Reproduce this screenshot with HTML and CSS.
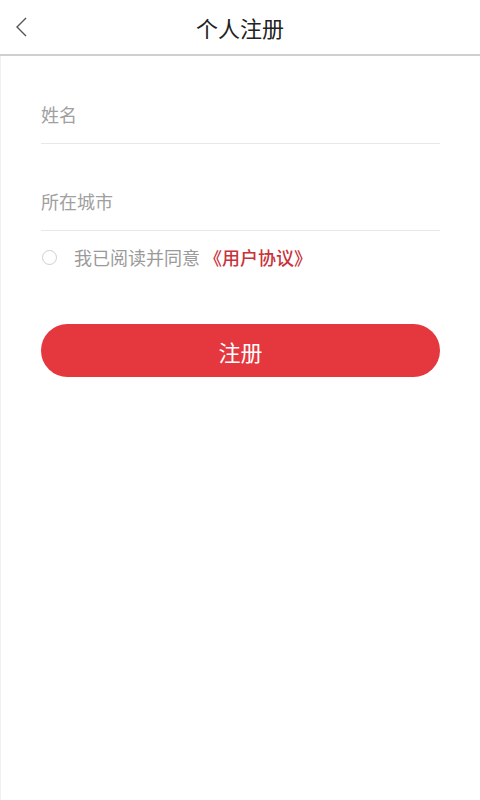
FILE: index.html
```html
<!DOCTYPE html>
<html lang="zh-CN">

<head>
    <meta charset="UTF-8">
    <meta name="viewport" content="width=device-width, initial-scale=1.0">
    <title>个人注册</title>
    <link rel="stylesheet" href="styles.css">
</head>

<body>
    <div class="header">
        <a class="back" href="#">
            <svg width="14" height="22" viewBox="0 0 14 22">
                <path d="M11 2 L2 11 L11 20" fill="none" stroke="#555" stroke-width="1.4" />
            </svg>
        </a>
        <h1>个人注册</h1>
    </div>

    <div class="container">
        <form id="regForm">
            <div class="field">
                <input type="text" name="name" placeholder="姓名">
            </div>
            <div class="field">
                <input type="text" name="city" placeholder="所在城市">
            </div>
            <label class="agree">
                <span class="radio"></span>
                <span>我已阅读并同意 <a href="#">《用户协议》</a></span>
            </label>
            <button type="submit" class="btn">注册</button>
        </form>
    </div>
</body>

</html>
```

FILE: styles.css
```css
body {
    font-family: "Noto Sans CJK SC", "Noto Sans", sans-serif;
    margin: 0;
    padding: 0;
    background-color: #fff;
    color: #333;
}

.header {
    height: 54px;
    display: flex;
    align-items: center;
    justify-content: center;
    position: relative;
    border-bottom: 2px solid #cfcfcf;
}

.header h1 {
    margin: 0;
    font-size: 22px;
    font-weight: normal;
    color: #222;
}

/* back arrow sits over the header */
.back {
    position: absolute;
    left: 15px;
    top: 16px;
    display: flex;
}

.container {
    padding: 0 40px;
    min-height: 744px;
    border-left: 1px solid #f0f0f0;
}

form {
    display: flex;
    flex-direction: column;
}

.field {
    padding-top: 29px;
    border-bottom: 1px solid #e8e8e8;
}

.field + .field {
    padding-top: 28px;
}

.field input {
    width: 100%;
    box-sizing: border-box;
    border: none;
    outline: none;
    padding: 0;
    height: 58px;
    font-family: inherit;
    font-size: 18px;
    color: #333;
    background: transparent;
}

.field input::placeholder {
    color: #a0a0a0;
}

.agree {
    display: flex;
    align-items: center;
    margin-top: 12px;
    height: 28px;
    font-size: 18px;
    color: #9a9a9a;
}

.agree a {
    color: #c9323a;
    font-weight: 500;
    text-decoration: none;
}

.radio {
    width: 13px;
    height: 13px;
    border: 1px solid #cfcfcf;
    border-radius: 50%;
    margin-left: 1px;
    margin-right: 17px;
}

.btn {
    margin-top: 53px;
    height: 53px;
    border: none;
    border-radius: 27px;
    background-color: #e4373e;
    color: #fff;
    font-family: inherit;
    font-size: 22px;
    cursor: pointer;
}
```
